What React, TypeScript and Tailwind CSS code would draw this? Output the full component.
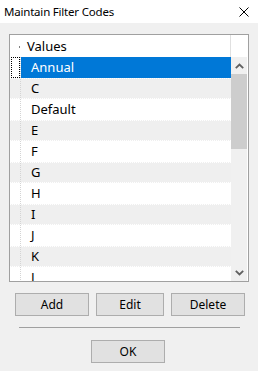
import React from 'react';

const ROWS = ['Annual', 'C', 'Default', 'E', 'F', 'G', 'H', 'I', 'J', 'K', 'L'];

const Chevron = ({ down }: { down?: boolean }) => (
  <svg width="9" height="6" viewBox="0 0 9 6" className={down ? 'rotate-180' : ''}>
    <path d="M0.8 5.2 L4.5 1.5 L8.2 5.2" fill="none" stroke="#606060" strokeWidth="1.8" />
  </svg>
);

const Button = ({ label, w }: { label: string; w: string }) => (
  <button className={`${w} h-[23px] bg-[#e1e1e1] border border-[#adadad] text-[12px] text-black leading-none`}>
    {label}
  </button>
);

const App: React.FC = () => {
  return (
    <div className="w-[258px] h-[371px] bg-[#f0f0f0] overflow-hidden font-['Noto_Sans',sans-serif] text-black">
      {/* title bar */}
      <div className="h-[23px] bg-white flex items-center justify-between pl-[4px] pr-[9px]">
        <span className="text-[11.5px] tracking-[-0.2px] leading-none">Maintain Filter Codes</span>
        <svg width="10" height="10" viewBox="0 0 10 10">
          <path d="M0.5 0.5 L9.5 9.5 M9.5 0.5 L0.5 9.5" stroke="#000" strokeWidth="1" />
        </svg>
      </div>

      {/* grid */}
      <div className="ml-[9px] mt-[11px] w-[240px] h-[248px] border border-[#a0a0a0] bg-white flex flex-col">
        <div className="h-[22px] flex shrink-0 bg-white">
          <div className="w-[11px] relative">
            <div className="absolute left-[9px] top-[11px] w-[1px] h-[2px] bg-[#808080]" />
          </div>
          <div className="w-[210px] border-r border-[#e0e0e0] flex items-center pl-[6px] pt-[2px] text-[13px]">
            Values
          </div>
          <div className="flex-1" />
        </div>
        <div className="flex flex-1 min-h-0">
          <div className="w-[221px] overflow-hidden">
            {ROWS.map((r, i) => {
              const selected = i === 0;
              const grey = i % 2 === 1;
              return (
                <div key={r} className={`h-[21px] flex ${grey ? 'bg-[#efefef] border-y border-dotted border-white' : ''}`}>
                  <div className="w-[11px] border-r border-dotted border-[#d4d4d4] flex items-stretch">
                    {selected && <div className="ml-[1px] w-[9px] border border-dotted border-black" />}
                  </div>
                  <div
                    className={`w-[210px] flex items-center pl-[10px] text-[13px] ${
                      selected ? 'bg-[#0078d7] text-white' : ''
                    }`}
                  >
                    {r}
                  </div>
                </div>
              );
            })}
          </div>
          <div className="w-[16px] bg-[#f0f0f0] flex flex-col">
            <div className="h-[17px] flex items-center justify-center">
              <Chevron />
            </div>
            <div className="h-[75px] bg-[#cdcdcd]" />
            <div className="flex-1" />
            <div className="h-[17px] flex items-center justify-center">
              <Chevron down />
            </div>
          </div>
          <div className="w-[1px]" />
        </div>
      </div>

      {/* buttons */}
      <div className="flex gap-[7px] ml-[15px] mt-[11px]">
        <Button label="Add" w="w-[74px]" />
        <Button label="Edit" w="w-[68px]" />
        <Button label="Delete" w="w-[74px]" />
      </div>
      <div className="ml-[19px] mt-[11px] w-[221px] h-[1px] bg-[#a0a0a0]" />
      <div className="flex justify-center mt-[12px] pr-[2px]">
        <Button label="OK" w="w-[74px]" />
      </div>
    </div>
  );
};

export default App;
